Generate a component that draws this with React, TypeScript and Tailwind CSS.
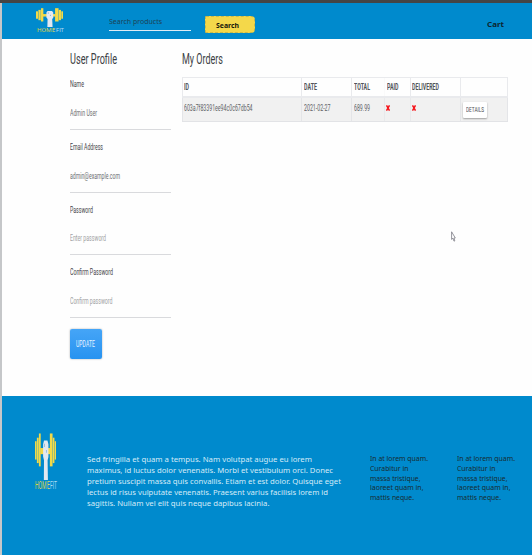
import { useLayoutEffect, useRef, useState } from "react";

type FitProps = { text: string; width: number; className?: string };

/** A single line of text, squeezed or stretched horizontally to a given width. */
function Fit({ text, width, className = "" }: FitProps) {
  const ref = useRef<HTMLSpanElement>(null);
  const [scale, setScale] = useState(1);
  useLayoutEffect(() => {
    const el = ref.current;
    if (el) setScale(width / el.getBoundingClientRect().width * scale);
  }, [width, text]);
  return (
    <div className={`shrink-0 whitespace-nowrap ${className}`} style={{ width }}>
      <span ref={ref} className="inline-block origin-left" style={{ transform: `scaleX(${scale})` }}>
        {text}
      </span>
    </div>
  );
}

const roboto = "font-['Roboto',sans-serif]";
const noto = "font-['Noto_Sans',sans-serif]";

function Dumbbell({ className }: { className: string }) {
  return (
    <svg viewBox="0 0 28 20" preserveAspectRatio="none" className={className}>
      <g fill="#f3da48">
        <rect x="0" y="3.5" width="2.1" height="7.8" />
        <rect x="2.5" y="2" width="2.4" height="10.8" />
        <rect x="5.2" y="0.2" width="2.4" height="14" />
        <rect x="19.8" y="0.2" width="3.6" height="14" />
        <rect x="23.7" y="2" width="2.2" height="10.8" />
        <rect x="26.2" y="3.5" width="1.8" height="7.8" />
        <rect x="7" y="6.4" width="13" height="2.6" />
      </g>
      <path d="M10.8 4.8 12 3.2h4.6l1.3 1.6v5.4l-1.1 1.4.4 8.4h-5.4l.2-8.4L10.8 10z" fill="#e3e8f0" />
      <path d="M12.8 4.6v1.4M15 7.2v1.2" stroke="#5b9ccb" strokeWidth=".7" fill="none" />
    </svg>
  );
}

type WordmarkProps = { className: string; textClass: string; widths: [number, number, number] };

function Wordmark({ className, textClass, widths }: WordmarkProps) {
  return (
    <div className={`flex items-center justify-between ${roboto} ${className}`}>
      <Fit text="HOM" width={widths[0]} className={`text-[#d3d052] ${textClass}`} />
      <Fit text="E" width={widths[1]} className={`text-[#e6dc58] ${textClass}`} />
      <Fit text="FIT" width={widths[2]} className={`text-[#b4dcf2] ${textClass}`} />
    </div>
  );
}

type FieldProps = { label: string; labelWidth: number; value: string; valueWidth: number; placeholder?: boolean };

function Field({ label, labelWidth, value, valueWidth, placeholder }: FieldProps) {
  return (
    <div className="mb-[6.7px]">
      <div className="flex h-5 items-center">
        <Fit text={label} width={labelWidth} className="text-[9.5px] leading-none text-[#3f4247]" />
      </div>
      <div className="flex h-9 items-center border-b border-[#d9dadd] pt-[2.6px]">
        <Fit
          text={value}
          width={valueWidth}
          className={`text-[9.5px] leading-none ${placeholder ? "text-[#a0a1a3]" : "text-[#6b6d71]"}`}
        />
      </div>
    </div>
  );
}

const columns = "grid grid-cols-[119.4px_49.8px_33.3px_25.5px_50.5px_48px]";
const heads: [string, number][] = [["ID", 5], ["DATE", 13], ["TOTAL", 16], ["PAID", 11.5], ["DELIVERED", 27]];

const lorem: [string, number][] = [
  ["Sed fringilla et quam a tempus. Nam volutpat augue eu lorem", 225],
  ["maximus, id luctus dolor venenatis. Morbi et vestibulum orci. Donec", 246],
  ["pretium suscipit massa quis convallis. Etiam et est dolor. Quisque eget", 254],
  ["lectus id risus vulputate venenatis. Praesent varius facilisis lorem id", 241],
  ["sagittis. Nullam vel elit quis neque dapibus lacinia.", 182.5],
];

const aside: [string, number][] = [
  ["In at lorem quam.", 58],
  ["Curabitur in", 38.5],
  ["massa tristique,", 50.5],
  ["laoreet quam in,", 53.5],
  ["mattis neque.", 44],
];

function Aside() {
  return (
    <div className={`mt-[58px] text-[7.2px] leading-[9.8px] text-[#172c32] ${noto}`}>
      {aside.map(([text, width]) => (
        <Fit key={text} text={text} width={width} />
      ))}
    </div>
  );
}

export default function App() {
  return (
    <div className="relative flex h-[555px] w-[532px] flex-col overflow-hidden bg-[#fefefe]">
      <div className="h-[3px] shrink-0 bg-[#454545]" />
      <div className="flex min-h-0 flex-1 flex-col border-l-2 border-[#c5c7c9]">
        <header className={`flex h-9 shrink-0 bg-[#008acd] ${noto}`}>
          <div className="ml-[34px] mt-[5px] w-7">
            <Dumbbell className="block h-[19px] w-[27px]" />
            <Wordmark className="ml-px h-[6px] w-[27px]" textClass="text-[5px] leading-[6px]" widths={[14.5, 3.2, 8]} />
          </div>
          <div className="ml-[45px] mt-[13px] h-[15px] w-[82px] border-b border-[#dcecf5]">
            <Fit text="Search products" width={53} className="text-[7.5px] leading-[11px] text-[#1d4355]" />
          </div>
          <div className="ml-[14px] mt-[12.5px] flex h-[17.5px] w-[50px] items-center justify-center rounded-r-[4px] rounded-l-[1px] border border-dashed border-[#c9b84b] bg-[#f4d84a] pr-[5px] pt-[3px]">
            <Fit text="Search" width={23} className="text-[7.5px] font-bold leading-none text-[#16160c]" />
          </div>
          <div className="ml-auto mr-[28px] mt-[16px]">
            <Fit text="Cart" width={17} className="text-[7.5px] font-bold leading-[11px] text-[#0c2630]" />
          </div>
        </header>

        <main className={`flex h-[357px] shrink-0 ${roboto}`}>
          <section className="ml-[67.6px] w-[101px]">
            <div className="flex h-[35px] items-center pt-[4px]">
              <Fit text="User Profile" width={47} className="text-[14px] leading-none text-[#3c3f44]" />
            </div>
            <Field label="Name" labelWidth={14} value="Admin User" valueWidth={27} />
            <Field label="Email Address" labelWidth={33} value="admin@example.com" valueWidth={50} />
            <Field label="Password" labelWidth={23} value="Enter password" valueWidth={36} placeholder />
            <Field label="Confirm Password" labelWidth={43} value="Confirm password" valueWidth={42.5} placeholder />
            <div className="mt-[11px] flex h-[30px] w-8 items-center justify-center rounded-[2px] bg-gradient-to-b from-[#45a5f7] to-[#2793f0] shadow-[0_0_2px_rgba(0,0,0,0.35)]">
              <Fit text="UPDATE" width={19} className="text-[9px] leading-none text-[#e6f3ff]" />
            </div>
          </section>

          <section className="ml-[11.4px] w-[326.5px]">
            <div className="flex h-[38px] items-center pt-px">
              <Fit text="My Orders" width={41} className="text-[14px] leading-none text-[#3c3f44]" />
            </div>
            <div className={`${columns} h-[21px] border-t border-[#e9eaed] border-b-2 border-b-[#e9eaed]`}>
              {heads.map(([text, width], i) => (
                <div
                  key={text}
                  className={`flex items-center border-l pl-[1.5px] pt-px ${i === 3 ? "border-[#fafafa]" : "border-[#e9eaed]"}`}
                >
                  <Fit text={text} width={width} className="text-[8.5px] font-bold leading-none text-[#515459]" />
                </div>
              ))}
              <div className="border-x border-[#e9eaed]" />
            </div>
            <div className={`${columns} h-6 border-b border-[#e2e3e6] bg-[#f1f1f1] text-[9.5px] leading-none text-[#606266]`}>
              <div className="flex items-center border-l border-[#e4e5e8] pb-[3px] pl-[1.5px]">
                <Fit text="603a7f83391ee94c0c67db54" width={68.5} />
              </div>
              <div className="flex items-center border-l border-[#e4e5e8] pb-[3px] pl-[1.5px]">
                <Fit text="2021-02-27" width={26.5} />
              </div>
              <div className="flex items-center border-l border-[#e4e5e8] pb-[3px] pl-[1.5px]">
                <Fit text="689.99" width={16} />
              </div>
              {["paid", "delivered"].map((flag) => (
                <div key={flag} className="flex items-center border-l border-[#e8e9eb] pb-[3px] pl-[1px]">
                  <svg viewBox="0 0 4 5" className="h-[6px] w-[4px]" preserveAspectRatio="none">
                    <path d="M.5.3 3.5 4.7M3.5.3.5 4.7" stroke="#f51218" strokeWidth="1.4" />
                  </svg>
                </div>
              ))}
              <div className="border-x border-[#e4e5e8] pl-[1.5px] pt-[4px]">
                <div className="flex h-4 w-6 items-center justify-center rounded-[1px] bg-white shadow-[0_1px_2px_rgba(0,0,0,0.35)]">
                  <Fit text="DETAILS" width={18} className="text-[7.5px] leading-none text-[#4c4e52]" />
                </div>
              </div>
            </div>
          </section>
        </main>

        <footer className="flex flex-1 bg-[#008acd]">
          <div className="ml-[33px] mt-[37px] w-[22px]">
            <Dumbbell className="block h-[47px] w-[21px]" />
            <Wordmark className="h-[12px] w-[22px]" textClass="text-[10px] leading-[12px]" widths={[11.5, 2.8, 7]} />
          </div>
          <div className={`ml-[30px] mt-[58px] w-[283px] text-[7.6px] leading-[11px] text-[#d5ebf8] ${noto}`}>
            {lorem.map(([text, width]) => (
              <Fit key={text} text={text} width={width} />
            ))}
          </div>
          <div className="flex gap-[29px]">
            <Aside />
            <Aside />
          </div>
        </footer>
      </div>

      <svg viewBox="0 0 5 11" className="absolute left-[451px] top-[231px] h-[11px] w-[5px]">
        <path d="M.6.8v7.6l1.2-1.2 1.2 3 .8-.4-.9-2.8h1.4z" fill="#fff" stroke="#7b7b84" strokeWidth=".8" />
      </svg>
    </div>
  );
}
